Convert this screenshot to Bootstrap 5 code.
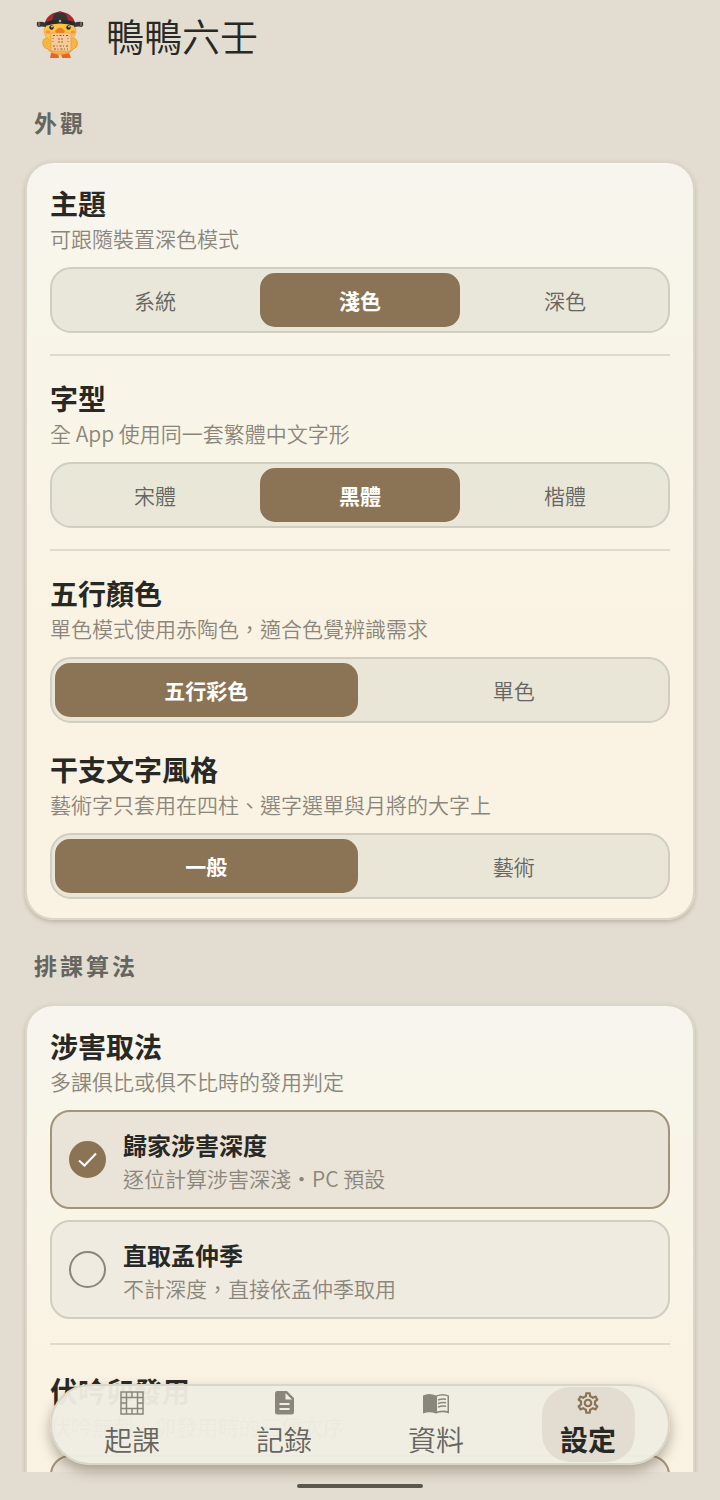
<!DOCTYPE html>
<html lang="zh-Hant">
<head>
<meta charset="utf-8">
<meta name="viewport" content="width=device-width, initial-scale=1">
<title>鴨鴨六壬</title>
<link href="https://cdn.jsdelivr.net/npm/bootstrap@5.3.0/dist/css/bootstrap.min.css" rel="stylesheet">
<style>
  :root { --paper: #e3ddd1; --ink: #282825; --soft: #666560; --faint: #8b867b; --brown: #8b7355; --line: #d0cec1; }
  body { background: var(--paper); color: var(--ink); font-family: "Noto Sans CJK TC", "Noto Sans", sans-serif; }
  .app-head { height: 70px; padding-left: 30px; gap: 16px; }
  .app-head h1 { font-size: 38px; line-height: 48px; font-weight: 350; }
  .duck { width: 60px; height: 60px; }
  .app-main { min-height: 0; }
  .scroller { overflow-y: auto; scrollbar-width: none; padding: 35px 25px 0; }
  .scroller::-webkit-scrollbar { display: none; }
  .group-label { font-size: 23px; line-height: 34px; font-weight: 700; letter-spacing: 3px; color: var(--soft); margin: 0 0 22px 9px; }
  .panel { border: 2px solid #dad6ca; border-radius: 28px; padding: 21px 23px 19px; margin-bottom: 28px;
    background: linear-gradient(#f8f5ef, #f8f5e8 25%, #faf3e4 60%, #faf3e4); background-clip: padding-box;
    box-shadow: 0 2px 4px rgba(90, 75, 50, .28); }
  .set-title { font-size: 28px; line-height: 38px; font-weight: 700; margin: 0; }
  .set-note { font-size: 21px; line-height: 32px; font-weight: 350; color: var(--faint); margin: 0 0 13px; }
  .rule { height: 2px; border: 0; opacity: 1; background: #dfdace; margin: 21px 0 23px; }
  .rule-wide { margin: 24px 0 27px; }
  .stacked { margin-top: 27px; }
  .segments { height: 66px; border: 2px solid var(--line); border-radius: 21px; padding: 4px 3px; gap: 5px; background: rgba(222, 222, 207, .6); }
  .segments label { flex: 1 1 0; border-radius: 15px; padding-top: 2px; font-size: 21px; font-weight: 350; color: var(--soft); cursor: pointer; }
  .segments .btn-check:checked + label { background: var(--brown); color: #fff; font-weight: 700; }
  .choice { height: 99px; border: 2px solid var(--line); border-radius: 20px; padding: 0 17px; gap: 17px; margin-bottom: 11px; background: #efebe1; cursor: pointer; }
  .choice:has(:checked) { border-color: #a39378; background: #eae3d7; }
  .choice .form-check-input { width: 37px; height: 37px; border: 2px solid var(--faint); background-color: transparent; margin: 0; }
  .choice .form-check-input:checked { border-color: var(--brown); background-color: var(--brown); background-size: 37px; background-position: center;
    background-image: url("data:image/svg+xml,%3Csvg xmlns='http://www.w3.org/2000/svg' viewBox='0 0 37 37'%3E%3Cpath d='M10 19.500l5.500 5 11.500-12' fill='none' stroke='%23fff' stroke-width='2'/%3E%3C/svg%3E"); }
  .choice-text { padding-top: 2px; }
  .choice-title { font-size: 24px; line-height: 34px; font-weight: 700; }
  .choice-note { font-size: 21px; line-height: 32px; font-weight: 350; color: var(--faint); }
  .tabs { left: 50px; right: 50px; bottom: 7px; height: 81px; border: 2px solid #d9d6c9; border-radius: 41px; padding: 0 4px;
    background: rgba(239, 237, 226, .96); box-shadow: 0 6px 13px rgba(70, 58, 38, .4); }
  .tab { width: 93px; height: 75px; border-radius: 28px; padding-top: 3px; color: var(--soft); text-decoration: none; font-size: 28px; line-height: 46px; font-weight: 350; }
  .tab svg { width: 26px; height: 26px; color: var(--faint); flex: none; }
  .tab.active { background: #e3dcd0; color: var(--ink); font-weight: 700; }
  .tab.active svg { color: var(--brown); }
  .home-area { height: 28px; }
  .home-bar { width: 126px; height: 4px; border-radius: 2px; background: #5d584e; }
</style>
</head>
<body>
<div class="d-flex flex-column vh-100 overflow-hidden">
  <header class="app-head d-flex align-items-center flex-shrink-0">
    <svg class="duck" viewBox="0 0 60 60" aria-hidden="true">
      <path d="M21 48l-1 5h9l-1-5zM31 48l1 5h9l-2-5z" fill="#e8622b"/>
      <path d="M16 33C11 35 12 43 18 44C21 51 40 51 43 44C48 43 49 35 44 33Z" fill="#fbb63c" stroke="#e99a35"/>
      <ellipse cx="30" cy="26" rx="16" ry="12" fill="#fdc443" stroke="#efa337" stroke-width=".7"/>
      <circle cx="21.500" cy="22.500" r="2.200" fill="#332723"/><circle cx="38.500" cy="22.500" r="2.200" fill="#332723"/>
      <circle cx="22" cy="21.800" r=".8" fill="#fff"/><circle cx="39" cy="21.800" r=".8" fill="#fff"/>
      <ellipse cx="18" cy="27" rx="2.500" ry="1.500" fill="#f58d54"/><ellipse cx="43" cy="27" rx="2.500" ry="1.500" fill="#f58d54"/>
      <path d="M25 26q5-7 10 0l-1 2h-8z" fill="#ee7e22"/>
      <rect x="21" y="28" width="20" height="18" rx="1" fill="#f7cb98" stroke="#d8935d" stroke-width=".6"/>
      <path d="M23 30.500h16M23 41h16M24 44h14" stroke="#8a5540" stroke-width="1.200" stroke-dasharray="2 1.500 1 2"/>
      <path d="M28 34h6M28 37h6" stroke="#9a6248" stroke-width="1.200" stroke-dasharray="2 1"/>
      <path d="M23 33v6M38 33v6" stroke="#a06a4e" stroke-dasharray="1 2"/>
      <path d="M15 18C16 12 21 8 28 7q2-2 4 0C39 8 44 12 45 18Z" fill="#a92b2e"/>
      <path d="M24 9q6-4 12 0l3 9H21z" fill="#34343b"/>
      <path d="M15 17q15-5 30 0v4q-15-5-30 0z" fill="#29292f"/>
      <path d="M7 17q5-1 9 1v4q-5-1-8 0q-2-2-1-5zM53 17q-5-1-9 1v4q5-1 8 0q2-2 1-5z" fill="#37353a"/>
      <path d="M9 17v4M51 17v4" stroke="#b99255"/>
      <circle cx="30" cy="7" r="1" fill="#c14434"/><circle cx="30" cy="16" r="1.300" fill="#d2a55b"/>
    </svg>
    <h1 class="m-0">鴨鴨六壬</h1>
  </header>

  <div class="app-main position-relative flex-grow-1">
    <main class="scroller h-100">
      <h2 class="group-label">外觀</h2>
      <section class="panel">
        <h3 class="set-title">主題</h3>
        <p class="set-note">可跟隨裝置深色模式</p>
        <div class="segments d-flex" role="group" aria-label="主題">
          <input class="btn-check" type="radio" name="theme" id="theme-system"><label class="d-flex align-items-center justify-content-center" for="theme-system">系統</label>
          <input class="btn-check" type="radio" name="theme" id="theme-light" checked><label class="d-flex align-items-center justify-content-center" for="theme-light">淺色</label>
          <input class="btn-check" type="radio" name="theme" id="theme-dark"><label class="d-flex align-items-center justify-content-center" for="theme-dark">深色</label>
        </div>
        <hr class="rule">
        <h3 class="set-title">字型</h3>
        <p class="set-note">全 App 使用同一套繁體中文字形</p>
        <div class="segments d-flex" role="group" aria-label="字型">
          <input class="btn-check" type="radio" name="face" id="face-song"><label class="d-flex align-items-center justify-content-center" for="face-song">宋體</label>
          <input class="btn-check" type="radio" name="face" id="face-hei" checked><label class="d-flex align-items-center justify-content-center" for="face-hei">黑體</label>
          <input class="btn-check" type="radio" name="face" id="face-kai"><label class="d-flex align-items-center justify-content-center" for="face-kai">楷體</label>
        </div>
        <hr class="rule">
        <h3 class="set-title">五行顏色</h3>
        <p class="set-note">單色模式使用赤陶色，適合色覺辨識需求</p>
        <div class="segments d-flex" role="group" aria-label="五行顏色">
          <input class="btn-check" type="radio" name="hue" id="hue-five" checked><label class="d-flex align-items-center justify-content-center" for="hue-five">五行彩色</label>
          <input class="btn-check" type="radio" name="hue" id="hue-mono"><label class="d-flex align-items-center justify-content-center" for="hue-mono">單色</label>
        </div>
        <h3 class="set-title stacked">干支文字風格</h3>
        <p class="set-note">藝術字只套用在四柱、選字選單與月將的大字上</p>
        <div class="segments d-flex" role="group" aria-label="干支文字風格">
          <input class="btn-check" type="radio" name="style" id="style-plain" checked><label class="d-flex align-items-center justify-content-center" for="style-plain">一般</label>
          <input class="btn-check" type="radio" name="style" id="style-art"><label class="d-flex align-items-center justify-content-center" for="style-art">藝術</label>
        </div>
      </section>

      <h2 class="group-label">排課算法</h2>
      <section class="panel">
        <h3 class="set-title">涉害取法</h3>
        <p class="set-note">多課俱比或俱不比時的發用判定</p>
        <label class="choice d-flex align-items-center" for="she-depth">
          <input class="form-check-input flex-shrink-0" type="radio" name="she" id="she-depth" checked>
          <span class="choice-text d-flex flex-column"><span class="choice-title">歸家涉害深度</span><span class="choice-note">逐位計算涉害深淺・PC 預設</span></span>
        </label>
        <label class="choice d-flex align-items-center" for="she-direct">
          <input class="form-check-input flex-shrink-0" type="radio" name="she" id="she-direct">
          <span class="choice-text d-flex flex-column"><span class="choice-title">直取孟仲季</span><span class="choice-note">不計深度，直接依孟仲季取用</span></span>
        </label>
        <hr class="rule rule-wide">
        <h3 class="set-title">伏吟卯發用</h3>
        <p class="set-note">伏吟無剋、卯發用時的三傳次序</p>
        <label class="choice d-flex align-items-center" for="fu-default">
          <input class="form-check-input flex-shrink-0" type="radio" name="fu" id="fu-default" checked aria-label="伏吟卯發用">
        </label>
      </section>
    </main>

    <nav class="tabs position-absolute d-flex align-items-center" aria-label="主選單">
      <div class="col d-flex justify-content-center">
        <a class="tab d-flex flex-column align-items-center" href="#cast">
          <svg viewBox="0 0 26 26" fill="none" stroke="currentColor" stroke-width="1.500" aria-hidden="true"><path d="M2 2h22v22H2zM7.500 7.500h11v11h-11zM7.500 2v5.500M13 2v5.500M18.500 2v5.500M7.500 18.500V24M13 18.500V24M18.500 18.500V24M2 7.500h5.500M2 13h5.500M2 18.500h5.500M18.500 7.500H24M18.500 13H24M18.500 18.500H24"/></svg>
          <span>起課</span></a>
      </div>
      <div class="col d-flex justify-content-center">
        <a class="tab d-flex flex-column align-items-center" href="#records">
          <svg viewBox="0 0 26 26" fill="currentColor" aria-hidden="true"><path fill-rule="evenodd" d="M6 1h10l7 7v14a2.500 2.500 0 0 1-2.500 2.500h-14A2.500 2.500 0 0 1 4 22V3.500A2.500 2.500 0 0 1 6 1zM14.500 3v6.500H21zM8.500 13v2h10v-2zM8.500 18v2h10v-2z"/></svg>
          <span>記錄</span></a>
      </div>
      <div class="col d-flex justify-content-center">
        <a class="tab d-flex flex-column align-items-center" href="#library">
          <svg viewBox="0 0 26 26" aria-hidden="true"><path d="M0 5.500Q6 2.500 13 5.500Q20 2.500 26 5.500V23.500Q20 21 13 23.500Q6 21 0 23.500Z" fill="currentColor"/><path d="M14 6.500q5-2 10.500-.3v14.800q-5-1-10.500.6z" fill="#efede2"/><path d="M15 10q4-1.500 8-.8M15 13.500q4-1.500 8-.8M15 17q4-1.500 8-.8" fill="none" stroke="currentColor" stroke-width="1.500"/></svg>
          <span>資料</span></a>
      </div>
      <div class="col d-flex justify-content-center">
        <a class="tab active d-flex flex-column align-items-center" href="#settings" aria-current="page">
          <svg viewBox="0 0 24 24" fill="currentColor" aria-hidden="true"><path d="M19.430 12.980c.040-.320.070-.640.070-.980s-.030-.660-.070-.980l2.110-1.650c.190-.150.240-.420.120-.640l-2-3.460c-.090-.160-.260-.250-.440-.250-.060 0-.120.010-.170.030l-2.490 1c-.520-.400-1.080-.730-1.690-.980l-.380-2.650C14.460 2.180 14.250 2 14 2h-4c-.250 0-.460.180-.490.420l-.380 2.650c-.610.250-1.170.590-1.690.980l-2.490-1c-.060-.020-.120-.030-.180-.030-.170 0-.340.090-.430.250l-2 3.460c-.130.220-.070.490.120.640l2.110 1.650c-.040.320-.070.650-.070.980s.030.660.070.980l-2.110 1.650c-.190.150-.240.420-.120.640l2 3.460c.090.160.260.250.440.250.060 0 .120-.010.170-.030l2.490-1c.520.400 1.080.730 1.690.980l.380 2.650c.030.240.240.420.490.420h4c.250 0 .460-.180.490-.420l.380-2.650c.610-.250 1.170-.590 1.690-.980l2.490 1c.060.020.120.030.180.030.170 0 .340-.090.430-.250l2-3.460c.120-.220.070-.490-.120-.640l-2.110-1.650zm-1.980-1.710c.040.310.050.520.050.730s-.020.430-.050.730l-.140 1.130.890.700 1.080.840-.700 1.210-1.270-.510-1.040-.420-.900.680c-.430.320-.840.560-1.250.730l-1.060.430-.160 1.130-.200 1.350h-1.400l-.190-1.350-.160-1.130-1.060-.430c-.430-.180-.830-.410-1.230-.710l-.910-.700-1.060.430-1.270.510-.700-1.210 1.080-.840.890-.700-.140-1.130c-.030-.310-.050-.540-.050-.740s.020-.430.050-.730l.140-1.130-.890-.700-1.080-.840.700-1.210 1.270.510 1.040.420.900-.680c.430-.320.840-.560 1.250-.730l1.060-.430.160-1.130.200-1.350h1.390l.190 1.350.160 1.130 1.060.430c.430.180.830.410 1.230.710l.910.700 1.060-.430 1.270-.510.700 1.210-1.070.850-.890.700.140 1.130zM12 8c-2.210 0-4 1.790-4 4s1.790 4 4 4 4-1.790 4-4-1.790-4-4-4zm0 6c-1.100 0-2-.900-2-2s.900-2 2-2 2 .900 2 2-.900 2-2 2z"/></svg>
          <span>設定</span></a>
      </div>
    </nav>
  </div>

  <div class="home-area d-flex align-items-center justify-content-center flex-shrink-0"><div class="home-bar"></div></div>
</div>
<script src="https://cdn.jsdelivr.net/npm/bootstrap@5.3.0/dist/js/bootstrap.bundle.min.js"></script>
</body>
</html>
